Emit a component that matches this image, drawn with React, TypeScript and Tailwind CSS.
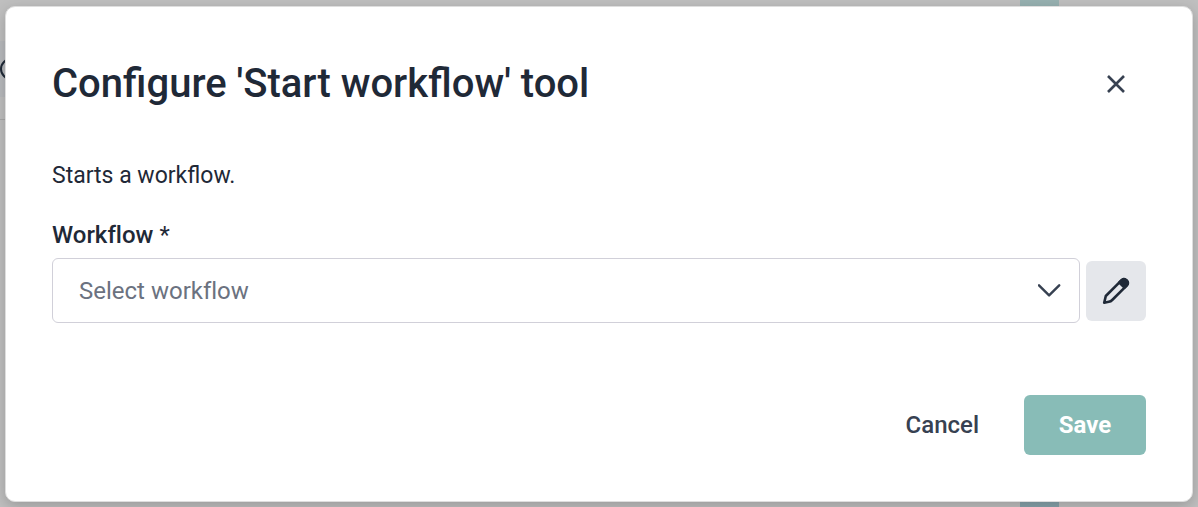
import { useState } from "react";

function CloseIcon() {
  return (
    <svg viewBox="0 0 20 20" className="size-5" fill="none" stroke="currentColor" strokeWidth="2.6" aria-hidden="true">
      <path d="M2 2 18 18M18 2 2 18" />
    </svg>
  );
}

function ChevronIcon() {
  return (
    <svg
      viewBox="0 0 24 24"
      className="pointer-events-none absolute top-1/2 right-[18px] size-6 -translate-y-1/2 text-[#374151]"
      fill="none"
      stroke="currentColor"
      strokeWidth="2.4"
      strokeLinecap="round"
      strokeLinejoin="round"
      aria-hidden="true"
    >
      <path d="M1 6.3 11.1 16.4 21.2 6.3" />
    </svg>
  );
}

function PencilIcon() {
  return (
    <svg viewBox="0 0 30 30" className="size-[30px]" fill="none" stroke="currentColor" strokeWidth="2.6" strokeLinejoin="round" aria-hidden="true">
      <path d="M3.2 26.8 4.8 20 20.4 4.4Q22.9 1.9 25.6 4.4Q28.1 7.1 25.6 9.6L11.2 24Q9.8 25.4 7.8 25.8Z" />
      <path d="M18.3 6.5 20.4 4.4Q22.9 1.9 25.6 4.4Q28.1 7.1 25.6 9.6L23.5 11.7Z" fill="currentColor" />
    </svg>
  );
}

/* Page content dimmed behind the dialog */
function Backdrop() {
  return (
    <div className="absolute inset-0 overflow-hidden bg-[#bfbfbf]" aria-hidden="true">
      <div className="absolute top-0 right-[139px] h-full w-[39px] bg-linear-to-b from-[#97b1b1] to-[#87a3ab]" />
      <div className="absolute top-[41px] left-0 h-14 w-3 bg-[#b8babd]" />
      <div className="absolute top-[119px] left-0 h-px w-3 bg-[#a8a8a8]" />
      <div className="absolute top-[58px] left-0 size-[22px] rounded-full border-2 border-[#1f2937]" />
    </div>
  );
}

export default function App() {
  const [workflow, setWorkflow] = useState("");

  return (
    <div className="relative min-h-screen pt-[6px] pr-[5px] pb-[5px] pl-[5px] font-['Roboto',sans-serif] text-[#1f2937]">
      <Backdrop />
      <div
        role="dialog"
        aria-modal="true"
        aria-labelledby="dialog-title"
        className="relative rounded-[10px] border border-[#dedede] bg-white px-[46px] pt-[46px] pb-[46px] shadow-[0_4px_14px_rgba(0,0,0,0.2)]"
      >
        <header className="flex items-center justify-between">
          <h1 id="dialog-title" className="text-[40px] leading-[62px] font-medium">
            Configure 'Start workflow' tool
          </h1>
          <button type="button" aria-label="Close" className="flex size-[60px] items-center justify-center text-[#374151]">
            <CloseIcon />
          </button>
        </header>

        <form onSubmit={(e) => e.preventDefault()}>
          <p className="mt-[43px] text-[23px] leading-9">Starts a workflow.</p>
          <label htmlFor="workflow" className="mt-[23px] block text-[24px] leading-9 font-medium [font-variant-ligatures:none]">
            Workflow <span className="font-normal">*</span>
          </label>
          <div className="mt-[5px] flex items-center gap-[6px]">
            <div className="relative flex-1">
              <select
                id="workflow"
                required
                value={workflow}
                onChange={(e) => setWorkflow(e.target.value)}
                className="block h-[65px] w-full appearance-none rounded-[6px] border border-[#d1d0d9] bg-white pr-14 pl-[26px] text-[24px] text-[#6b7280] [font-variant-ligatures:none]"
              >
                <option value="">Select workflow</option>
              </select>
              <ChevronIcon />
            </div>
            <button type="button" aria-label="Edit workflow" className="flex size-[60px] items-center justify-center rounded-[6px] bg-[#e5e7eb]">
              <PencilIcon />
            </button>
          </div>

          <footer className="mt-[72px] flex justify-end gap-[10px]">
            <button type="button" className="h-[60px] px-[35px] text-[24px] font-medium text-[#374151]">
              Cancel
            </button>
            <button type="submit" className="h-[60px] w-[122px] rounded-[6px] bg-[#88bcb7] text-[24px] font-bold text-white">
              Save
            </button>
          </footer>
        </form>
      </div>
    </div>
  );
}
